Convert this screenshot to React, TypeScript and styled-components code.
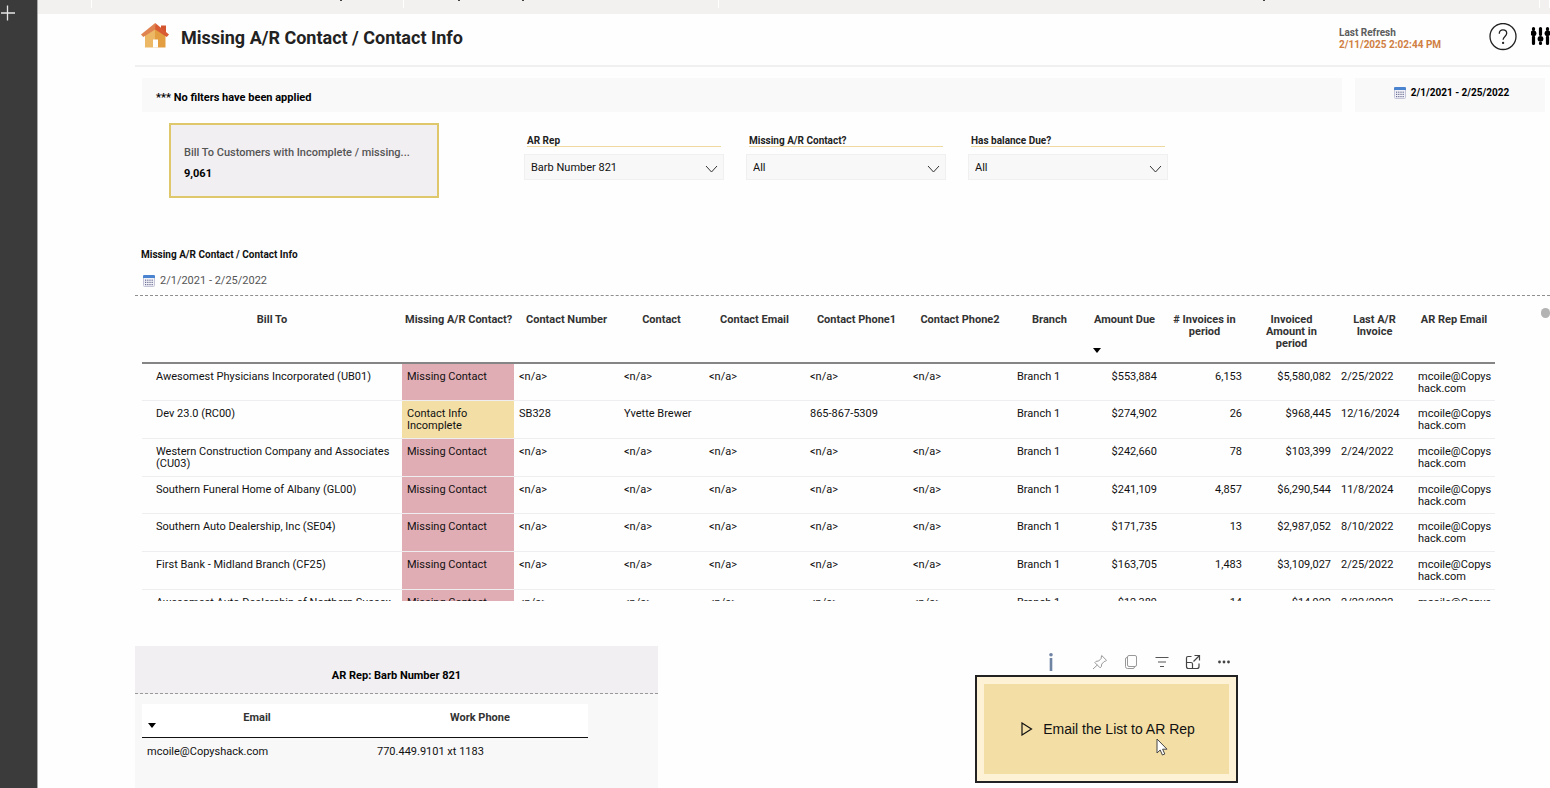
import React from "react";
import styled, { createGlobalStyle } from "styled-components";

const GlobalStyle = createGlobalStyle`
  *, *::before, *::after { box-sizing: border-box; }
  body {
    margin: 0;
    background: #fefefe;
    color: #111;
    font-family: Roboto, "Liberation Sans", sans-serif;
    font-size: 11px;
    line-height: 12px;
  }
  h1, h2, p { margin: 0; }
`;

const Shell = styled.div`
  display: flex;
  min-height: 100vh;
`;

const Rail = styled.aside`
  flex: 0 0 38px;
  background: #3b3b3b;
  border-right: 1px solid #a9a9a9;
`;

const AddButton = styled.button`
  display: block;
  width: 16px;
  height: 24px;
  padding: 4px 0 0;
  border: 0;
  background: none;
`;

const Main = styled.div`
  flex: 1;
  min-width: 0;
  display: flex;
  flex-direction: column;
`;

const Ribbon = styled.div`
  display: flex;
  height: 14px;
  padding-bottom: 6px;
  background: #f3f1f0;
`;

const RibbonGroup = styled.div<{ $width?: number; $end?: number }>`
  flex: ${(p) => (p.$width ? `0 0 ${p.$width}px` : "1")};
  display: flex;
  justify-content: flex-end;
  gap: 62px;
  padding-right: ${(p) => p.$end ?? 0}px;
  border-right: 1px solid #fff;
`;

const RibbonMark = styled.i`
  width: 2px;
  height: 1px;
  background: #444;
`;

const Report = styled.main`
  flex: 1;
  display: flex;
  flex-direction: column;
  padding-left: 97px;
`;

const Header = styled.header`
  display: flex;
  align-items: center;
  height: 53px;
  padding: 0 0 6px 6px;
  border-bottom: 2px solid #f0f0f0;
`;

const Title = styled.h1`
  flex: 1;
  margin-left: 12px;
  padding-top: 2px;
  font-size: 18px;
  line-height: 24px;
  font-weight: 700;
  color: #222;
`;

const Refresh = styled.div`
  width: 150px;
  padding-top: 4px;
  font-size: 10px;
  font-weight: 700;
  color: #5c5c5c;
`;

const RefreshTime = styled.p`
  color: #d07f43;
`;

const IconButton = styled.button`
  display: block;
  flex: none;
  padding: 0;
  border: 0;
  background: none;
  line-height: 0;
`;

const HeaderActions = styled.div`
  display: flex;
  align-items: center;
  gap: 14px;
`;

const StatusRow = styled.div`
  display: flex;
  gap: 13px;
  margin: 11px 5px 0 7px;
`;

const StatusBox = styled.div<{ $fixed?: boolean }>`
  flex: ${(p) => (p.$fixed ? "0 0 190px" : "1")};
  display: flex;
  align-items: center;
  justify-content: ${(p) => (p.$fixed ? "center" : "flex-start")};
  gap: 5px;
  height: 34px;
  padding: ${(p) => (p.$fixed ? "0 0 4px 3px" : "5px 14px 0")};
  background: #f9f9fa;
  color: #000;
  font-size: ${(p) => (p.$fixed ? "10px" : "11px")};
  font-weight: 700;
`;

const ControlRow = styled.div`
  display: flex;
  align-items: flex-start;
  margin: 11px 0 0 34px;
`;

const Kpi = styled.section`
  flex: 0 0 270px;
  height: 75px;
  margin-right: 85px;
  padding: 22px 13px 0;
  border: 2px solid #dfc76c;
  background: #f2eff2;
  font-weight: 700;
`;

const KpiLabel = styled.h2`
  overflow: hidden;
  font-size: 11px;
  line-height: 12px;
  font-weight: 500;
  color: #555;
  white-space: nowrap;
`;

const KpiValue = styled.p`
  margin-top: 9px;
  color: #000;
`;

const Filters = styled.div`
  display: flex;
  gap: 22px;
  padding-top: 12px;
`;

const Filter = styled.div`
  position: relative;
  width: 200px;

  svg {
    position: absolute;
    right: 6px;
    bottom: 7px;
    pointer-events: none;
  }
`;

const FilterLabel = styled.label`
  display: block;
  height: 12px;
  margin: 0 3px 7px;
  border-bottom: 1px solid #f0d9a0;
  font-size: 10px;
  font-weight: 700;
  color: #222;
`;

const Select = styled.select`
  display: block;
  width: 100%;
  height: 26px;
  padding: 1px 28px 0 6px;
  appearance: none;
  border: 1px solid #f0f0f0;
  border-radius: 0;
  background: #f8f8f8;
  color: #111;
  font: inherit;
`;

const SectionHead = styled.div`
  margin-top: 49px;
  padding: 0 6px 6px;
  border-bottom: 1px dashed #8f8f8f;
`;

const SectionTitle = styled.h2`
  font-size: 10px;
  line-height: 16px;
  font-weight: 700;
  color: #111;
`;

const Period = styled.p`
  display: flex;
  align-items: center;
  gap: 5px;
  margin-top: 10px;
  padding-left: 2px;
  line-height: 16px;
  color: #555;
`;

const TableViewport = styled.div`
  display: flex;
  height: 305px;
  padding-left: 7px;
  overflow: hidden;
`;

const ScrollTrack = styled.div`
  flex: 0 0 55px;
  display: flex;
  justify-content: flex-end;
  padding-top: 12px;
`;

const ScrollThumb = styled.div`
  width: 9px;
  height: 10px;
  border-radius: 5px;
  background: #b3b3b3;
`;

const TableBox = styled.div`
  flex: 1;
  min-width: 0;
`;

const DataTable = styled.table`
  width: 100%;
  table-layout: fixed;
  border-collapse: separate;
  border-spacing: 0;
`;

const HeadCell = styled.th<{ $nowrap?: boolean }>`
  position: relative;
  height: 68px;
  padding: 18px 3px 0;
  border-bottom: 2px solid #858585;
  vertical-align: top;
  font-weight: 700;
  color: #333;
  white-space: ${(p) => (p.$nowrap ? "nowrap" : "normal")};
`;

const SortMark = styled.span`
  position: absolute;
  left: 6px;
  bottom: 9px;
  border: 4px solid transparent;
  border-top: 5px solid #000;
  border-bottom: 0;
`;

const Row = styled.tr`
  height: 38px;

  &:nth-child(3n + 1) {
    height: 37px;
  }
`;

const Cell = styled.td<{ $align?: string; $tone?: string; $first?: boolean }>`
  padding-top: 7px;
  padding-right: ${(p) => (p.$align ? "5px" : "2px")};
  padding-left: ${(p) => (p.$first ? "14px" : p.$align ? "0" : "5px")};
  padding-bottom: 0;
  border-bottom: 1px solid #eeeef0;
  vertical-align: top;
  text-align: ${(p) => p.$align ?? "left"};
  background: ${(p) => p.$tone ?? "transparent"};
  overflow-wrap: anywhere;
`;

const Bottom = styled.div`
  flex: 1;
  display: flex;
  align-items: stretch;
  margin-top: 45px;
`;

const RepPanel = styled.section`
  flex: 0 0 523px;
  background: #f8f8f8;
`;

const RepTitle = styled.h2`
  height: 48px;
  padding-top: 24px;
  border-bottom: 1px dashed #999;
  background: #f2eff2;
  font-size: 11px;
  line-height: 12px;
  font-weight: 700;
  text-align: center;
  color: #000;
`;

const RepTable = styled.table`
  width: 446px;
  margin: 10px 0 0 7px;
  table-layout: fixed;
  border-spacing: 0;
`;

const RepHeadCell = styled.th`
  position: relative;
  height: 34px;
  padding: 8px 0 0;
  border-bottom: 1px solid #111;
  background: #fff;
  vertical-align: top;
  font-weight: 700;
  color: #333;
`;

const RepCell = styled.td`
  padding: 8px 5px 0;
`;

const Action = styled.section`
  width: 263px;
  margin-left: 317px;
`;

const VisualTools = styled.div`
  display: flex;
  align-items: center;
  justify-content: flex-end;
  gap: 15px;
  height: 29px;
  padding: 3px 6px 0 0;

  > :first-child {
    margin-right: 18px;
  }
`;

const SendButton = styled.button`
  position: relative;
  display: flex;
  align-items: center;
  justify-content: center;
  gap: 10px;
  width: 100%;
  height: 108px;
  padding: 0 0 0 3px;
  border: 2px solid #222;
  outline: 0;
  background: #f3dfa6;
  box-shadow: inset 0 0 0 7px #fdf1d6;
  color: #111;
  font-family: "Liberation Sans", sans-serif;
  font-size: 14px;
  line-height: 18px;
`;

const Pointer = styled.svg`
  position: absolute;
  left: 179px;
  top: 61px;
`;

const CalendarIcon = () => (
  <svg width="12" height="12" viewBox="0 0 12 12" aria-hidden="true">
    <rect x="0.5" y="0.5" width="11" height="11" rx="1" fill="#f1f1f8" stroke="#c3c4d8" />
    <path d="M0 1.2Q0 0 1.2 0h9.6Q12 0 12 1.2V3H0z" fill="#4a83cf" />
    {[4.6, 6.8, 9].map((y) =>
      [2, 4.2, 6.4, 8.6].map((x) => (
        <rect key={`${x}-${y}`} x={x} y={y} width="1.2" height="1.2" fill="#6c6d92" />
      ))
    )}
  </svg>
);

const HomeIcon = () => (
  <svg width="28" height="27" viewBox="0 0 28 27" aria-label="Home">
    <path d="M4 11L14 2v22.500H4z" fill="#ecb866" />
    <path d="M14 2l10.500 9v13.500H14z" fill="#e39e42" />
    <path d="M12 16.500h5v8h-5z" fill="#fefefe" />
    <path d="M20 2.500h5v8l-5-4z" fill="#d2552f" />
    <path d="M14.200 0L0 11.500l2.300 2.600L14.200 6.500z" fill="#df8350" />
    <path d="M14.200 0L28 11.500l-2.300 2.600L14.200 6.500z" fill="#d95b33" />
  </svg>
);

const Chevron = () => (
  <svg width="13" height="8" viewBox="0 0 13 8" fill="none" stroke="#333" aria-hidden="true">
    <path d="M1 1l5.500 6L12 1" />
  </svg>
);

const NA = "<n/a>";

const columns = [
  { label: "Bill To", width: 260 },
  { label: "Missing A/R Contact?", width: 112, nowrap: true },
  { label: "Contact Number", width: 105 },
  { label: "Contact", width: 85 },
  { label: "Contact Email", width: 101 },
  { label: "Contact Phone1", width: 103 },
  { label: "Contact Phone2", width: 104 },
  { label: "Branch", width: 75 },
  { label: "Amount Due", width: 75, right: true, sorted: true },
  { label: "# Invoices in period", width: 85, right: true },
  { label: "Invoiced Amount in period", width: 89, right: true },
  { label: "Last A/R Invoice", width: 77 },
  { label: "AR Rep Email", width: 82 },
];

const missing = ["Missing Contact", NA, NA, NA, NA, NA, "Branch 1"];
const email = "mcoile@Copyshack.com";

const rows = [
  ["Awesomest Physicians Incorporated (UB01)", ...missing, "$553,884", "6,153", "$5,580,082", "2/25/2022", email],
  ["Dev 23.0 (RC00)", "Contact Info Incomplete", "SB328", "Yvette Brewer", "", "865-867-5309", "", "Branch 1", "$274,902", "26", "$968,445", "12/16/2024", email],
  ["Western Construction Company and Associates (CU03)", ...missing, "$242,660", "78", "$103,399", "2/24/2022", email],
  ["Southern Funeral Home of Albany (GL00)", ...missing, "$241,109", "4,857", "$6,290,544", "11/8/2024", email],
  ["Southern Auto Dealership, Inc (SE04)", ...missing, "$171,735", "13", "$2,987,052", "8/10/2022", email],
  ["First Bank - Midland Branch (CF25)", ...missing, "$163,705", "1,483", "$3,109,027", "2/25/2022", email],
  ["Awesomest Auto Dealership of Northern Sussex", ...missing, "$12,389", "14", "$14,922", "2/22/2022", email],
];

const filters = [
  { id: "rep", label: "AR Rep", value: "Barb Number 821" },
  { id: "missing", label: "Missing A/R Contact?", value: "All" },
  { id: "balance", label: "Has balance Due?", value: "All" },
];

const tone = (index: number, value: string) => {
  if (index !== 1) return undefined;
  return value === "Missing Contact" ? "#e1adb5" : "#f3dfa6";
};

export default function App() {
  return (
    <>
      <GlobalStyle />
      <Shell>
        <Rail>
          <AddButton aria-label="Add">
            <svg width="14" height="16" viewBox="0 0 14 16" stroke="#e6e6e6" strokeWidth="1.300">
              <path d="M6.500 0.500v15M0 8h14" />
            </svg>
          </AddButton>
        </Rail>
        <Main>
          <Ribbon>
            <RibbonGroup $width={54} />
            <RibbonGroup $width={312} $end={61}>
              <RibbonMark />
            </RibbonGroup>
            <RibbonGroup $width={315} $end={194}>
              <RibbonMark />
              <RibbonMark />
            </RibbonGroup>
            <RibbonGroup $end={274}>
              <RibbonMark />
            </RibbonGroup>
            <RibbonGroup $width={10} />
          </Ribbon>
          <Report>
            <Header>
              <HomeIcon />
              <Title>Missing A/R Contact / Contact Info</Title>
              <Refresh>
                <p>Last Refresh</p>
                <RefreshTime>2/11/2025 2:02:44 PM</RefreshTime>
              </Refresh>
              <HeaderActions>
                <IconButton aria-label="Help">
                  <svg width="28" height="28" viewBox="0 0 28 28" fill="none" stroke="#222" strokeWidth="1.300">
                    <circle cx="14" cy="13.500" r="13" />
                    <path d="M10.300 10.700c0-2.400 1.500-3.900 3.700-3.900s3.700 1.400 3.700 3.500c0 3-3.600 3.300-3.600 6.400" />
                    <circle cx="14.100" cy="19.900" r="0.500" fill="#222" />
                  </svg>
                </IconButton>
                <IconButton aria-label="Filter settings">
                  <svg width="19" height="22" viewBox="0 0 19 22" stroke="#000" strokeWidth="3.200" strokeLinecap="round">
                    <path d="M2.500 2.500v1M2.500 11v6.500M9.500 2.500v6M9.500 17v.5M16.500 2.500v1M16.500 11v6.500" />
                    <g stroke="none">
                      <circle cx="2.500" cy="7.300" r="2.900" />
                      <circle cx="9.500" cy="12.800" r="2.900" />
                      <circle cx="16.500" cy="7.300" r="2.900" />
                    </g>
                  </svg>
                </IconButton>
              </HeaderActions>
            </Header>

            <StatusRow>
              <StatusBox>*** No filters have been applied</StatusBox>
              <StatusBox $fixed>
                <CalendarIcon />
                2/1/2021 - 2/25/2022
              </StatusBox>
            </StatusRow>

            <ControlRow>
              <Kpi>
                <KpiLabel>Bill To Customers with Incomplete / missing...</KpiLabel>
                <KpiValue>9,061</KpiValue>
              </Kpi>
              <Filters>
                {filters.map((f) => (
                  <Filter key={f.id}>
                    <FilterLabel htmlFor={f.id}>{f.label}</FilterLabel>
                    <Select id={f.id}>
                      <option>{f.value}</option>
                    </Select>
                    <Chevron />
                  </Filter>
                ))}
              </Filters>
            </ControlRow>

            <SectionHead>
              <SectionTitle>Missing A/R Contact / Contact Info</SectionTitle>
              <Period>
                <CalendarIcon />
                2/1/2021 - 2/25/2022
              </Period>
            </SectionHead>

            <TableViewport>
              <TableBox>
                <DataTable>
                  <colgroup>
                    {columns.map((c) => (
                      <col key={c.label} width={c.width} />
                    ))}
                  </colgroup>
                  <thead>
                    <tr>
                      {columns.map((c) => (
                        <HeadCell
                          key={c.label}
                          scope="col"
                          $nowrap={c.nowrap}
                          aria-sort={c.sorted ? "descending" : undefined}
                        >
                          {c.label}
                          {c.sorted && <SortMark />}
                        </HeadCell>
                      ))}
                    </tr>
                  </thead>
                  <tbody>
                    {rows.map((row) => (
                      <Row key={row[0]}>
                        {row.map((value, i) => (
                          <Cell
                            key={columns[i].label}
                            $first={i === 0}
                            $align={columns[i].right ? "right" : undefined}
                            $tone={tone(i, value)}
                          >
                            {value}
                          </Cell>
                        ))}
                      </Row>
                    ))}
                  </tbody>
                </DataTable>
              </TableBox>
              <ScrollTrack>
                <ScrollThumb />
              </ScrollTrack>
            </TableViewport>

            <Bottom>
              <RepPanel>
                <RepTitle>AR Rep: Barb Number 821</RepTitle>
                <RepTable>
                  <colgroup>
                    <col width={230} />
                    <col width={216} />
                  </colgroup>
                  <thead>
                    <tr>
                      <RepHeadCell scope="col" aria-sort="descending">
                        Email
                        <SortMark />
                      </RepHeadCell>
                      <RepHeadCell scope="col">Work Phone</RepHeadCell>
                    </tr>
                  </thead>
                  <tbody>
                    <tr>
                      <RepCell>mcoile@Copyshack.com</RepCell>
                      <RepCell>770.449.9101 xt 1183</RepCell>
                    </tr>
                  </tbody>
                </RepTable>
              </RepPanel>

              <Action>
                <VisualTools>
                  <IconButton aria-label="Information">
                    <svg width="16" height="18" viewBox="0 0 16 18" fill="#6f83a3">
                      <circle cx="8" cy="1.800" r="1.800" />
                      <rect x="6.700" y="5" width="2.600" height="13" />
                    </svg>
                  </IconButton>
                  <IconButton aria-label="Pin visual">
                    <svg width="16" height="16" viewBox="0 0 16 16" fill="none" stroke="#999">
                      <path d="M9.700 1.500l4.800 4.800-1.300 1-1 0.200-2.500 2.600-0.300 2.500-1.300 1.200L2.900 8.600l1.200-1.300 2.600-0.300 2.500-2.600 0.100-1.400zM5.300 11L1 15" />
                    </svg>
                  </IconButton>
                  <IconButton aria-label="Copy visual">
                    <svg width="16" height="16" viewBox="0 0 16 16" fill="none" stroke="#999">
                      <rect x="4.500" y="1.500" width="9" height="11" rx="1.500" />
                      <path d="M4.500 3.500H4Q2.500 3.500 2.500 5v7.500q0 2 2 2H10q1.500 0 1.500-1.500v-.5" />
                    </svg>
                  </IconButton>
                  <IconButton aria-label="Filters">
                    <svg width="16" height="16" viewBox="0 0 16 16" stroke="#555" strokeWidth="1.200">
                      <path d="M1.500 3.500h13M4 8h8M6 12.500h4" />
                    </svg>
                  </IconButton>
                  <IconButton aria-label="Focus mode">
                    <svg width="16" height="16" viewBox="0 0 16 16" fill="none" stroke="#444" strokeWidth="1.200">
                      <path d="M6.500 2.500H3q-1.500 0-1.500 1.500v8.500q0 2 2 2H12q2 0 2-2V9.500M1.500 8.500H6q1.500 0 1.500 1.500v4.500M9.500 1.500h5v5M14.500 1.500L8.500 7.500" />
                    </svg>
                  </IconButton>
                  <IconButton aria-label="More options">
                    <svg width="16" height="16" viewBox="0 0 16 16" fill="#444">
                      <circle cx="3.500" cy="8" r="1.400" />
                      <circle cx="8" cy="8" r="1.400" />
                      <circle cx="12.500" cy="8" r="1.400" />
                    </svg>
                  </IconButton>
                </VisualTools>
                <SendButton>
                  <svg width="12" height="14" viewBox="0 0 12 14" fill="none" stroke="#111" strokeWidth="1.200">
                    <path d="M1 1l9.500 6L1 13z" />
                  </svg>
                  Email the List to AR Rep
                  <Pointer width="12" height="18" viewBox="0 0 12 18" aria-hidden="true">
                    <path d="M1 1v14l3.200-3 2.200 5 2.400-1-2.200-4.800H11z" fill="#fff" stroke="#444" />
                  </Pointer>
                </SendButton>
              </Action>
            </Bottom>
          </Report>
        </Main>
      </Shell>
    </>
  );
}
